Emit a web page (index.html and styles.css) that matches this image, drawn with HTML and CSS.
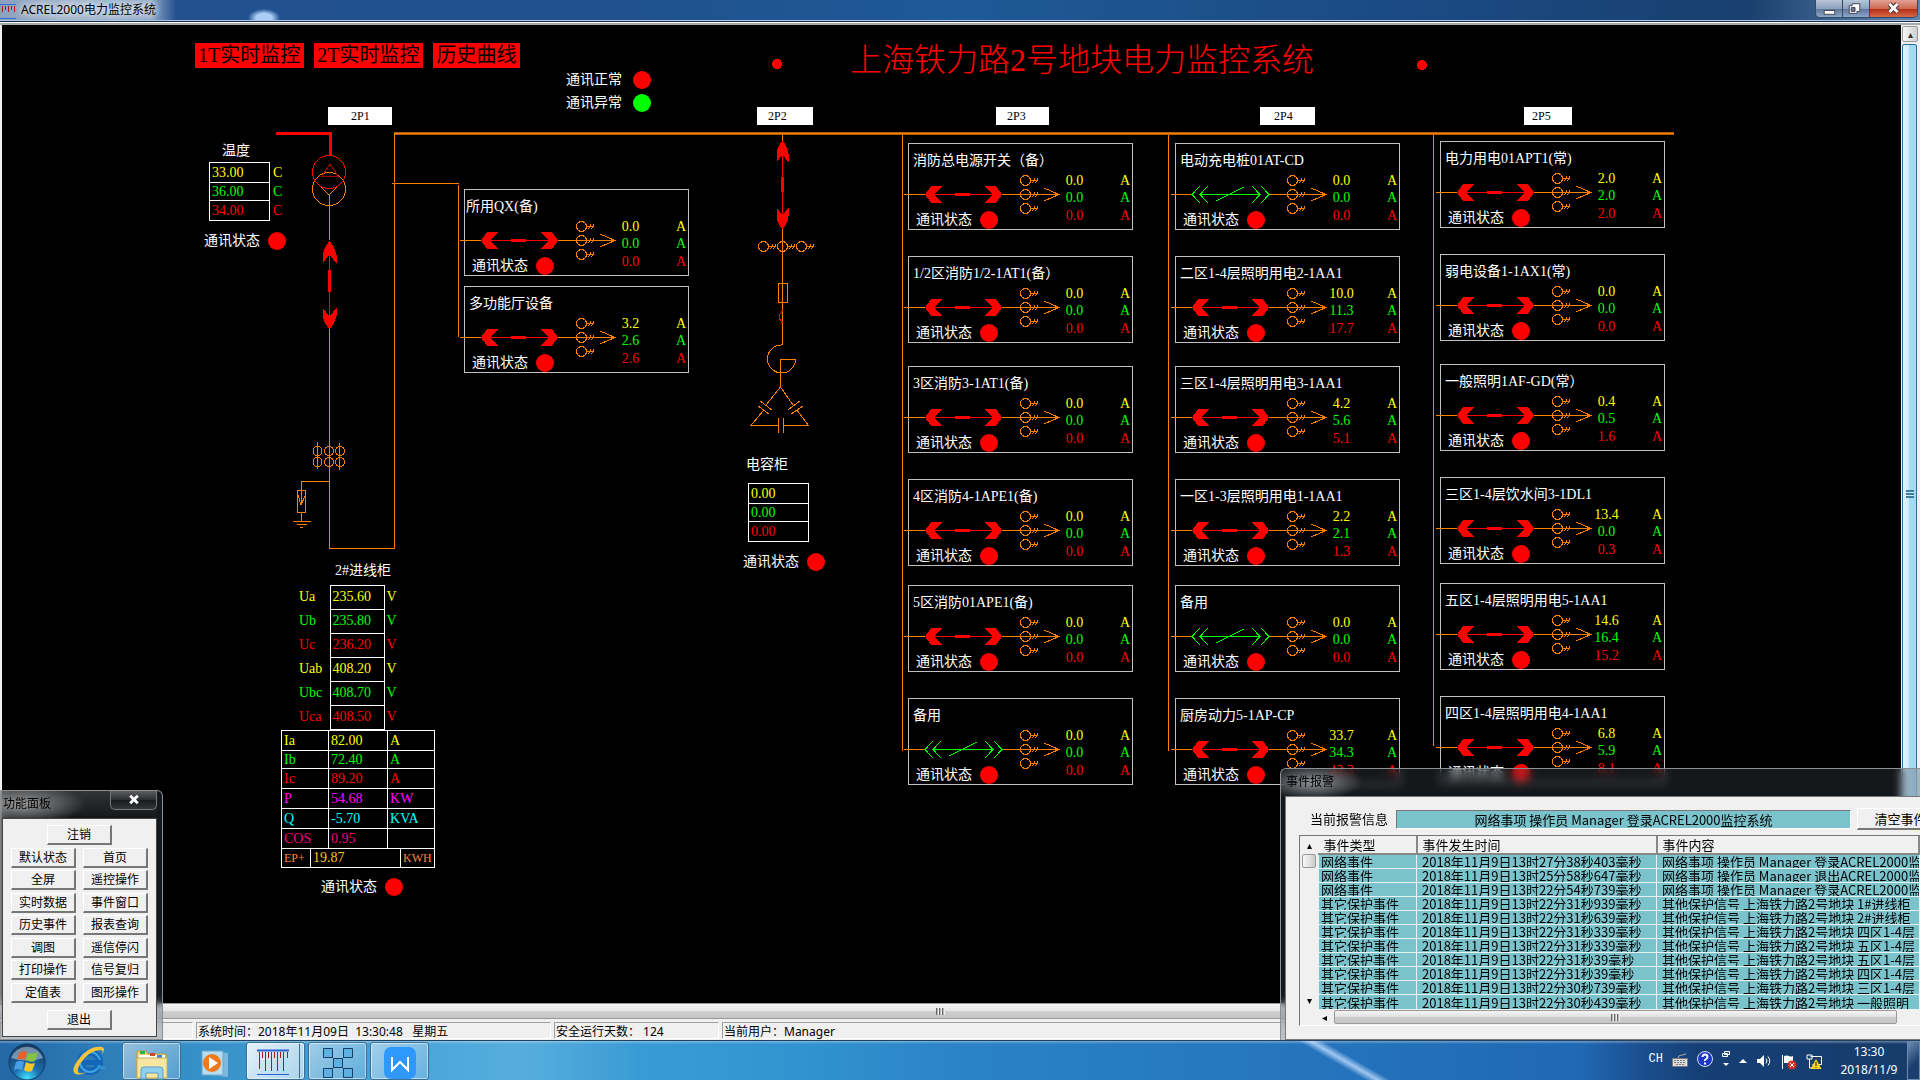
FILE: index.html
```html
<!DOCTYPE html>
<html lang="zh-CN">
<head>
<meta charset="utf-8">
<title>ACREL2000电力监控系统</title>
<link rel="stylesheet" href="styles.css">
</head>
<body>
<svg class="defs" aria-hidden="true">
  <defs>
    <g id="key"><circle cx="0" cy="0" r="5"/><path d="M5 0h4M7 3l2-5M10 3l2-5M9 0h3"/></g>
    <g id="feed">
      <path d="M-5 51.5H16M93 51.5H150M135 45l15 6.500l-15 6.500"/>
      <use href="#key" x="116.500" y="37.500"/><use href="#key" x="116.500" y="51.500"/><use href="#key" x="116.500" y="65.500"/>
    </g>
    <g id="closed">
      <use href="#feed"/>
      <path class="on" d="M16 51.500L22 43H33L25 51.500L33 60H22ZM93 51.500L87 43H76L84 51.500L76 60H87ZM25 51H84V52H25ZM46 50H61V53H46Z"/>
    </g>
    <g id="open">
      <use href="#feed"/>
      <path class="off" d="M24 43L16 51.500L24 60M32 43L24 51.500L32 60M24 51.500H84M40 58L68 44M76 43L84 51.500L76 60M85 43L93 51.500L85 60"/>
    </g>
  </defs>
</svg>

<header class="titlebar">
  <svg class="app-icon" viewBox="0 0 16 16"><path d="M0 1.500H16M0 15.500H16" stroke="#2d6fd8"/><path d="M2.500 3V9M5.500 3V7M8.500 3V9M11.500 3V7M14.500 3V9" stroke="#b01818"/></svg>
  <h1 class="app-title">ACREL2000电力监控系统</h1>
  <div class="caption-buttons">
    <button class="cap" aria-label="最小化"><svg viewBox="0 0 27 18"><rect x="8.500" y="10.500" width="11" height="4" fill="#fff" stroke="#445"/></svg></button>
    <button class="cap" aria-label="还原"><svg viewBox="0 0 27 18"><path d="M9.500 3.500h8v8h-3v2h-8v-8h3z" fill="#fff" stroke="#445"/><path d="M8.500 7.500h4v4h-4z" fill="#678" stroke="#445"/></svg></button>
    <button class="cap close" aria-label="关闭"><svg viewBox="0 0 47 18"><path d="M19.500 4l8 8m0-8l-8 8" stroke="#433" stroke-width="5"/><path d="M19.500 4l8 8m0-8l-8 8" stroke="#fff" stroke-width="3"/></svg></button>
  </div>
</header>

<main class="workspace">
<section class="mimic">
  <svg class="wiring" viewBox="2 25 1899 978">
    <g class="line">
      <path class="bus-edge" d="M394 133.500H1674"/>
      <path class="bus-core" d="M394 133.500H1674"/>
      <path d="M394.500 133V548.500H328.500M392 183.500H459M458.500 185V336.500M902.500 135V751M1168.500 135V751M1433.500 135V746"/>
      <circle cx="329" cy="189" r="16.500"/>
      <path d="M319 185l10 10l10-10M329.500 195V240M329.500 329V548"/>
      <circle cx="317.500" cy="451" r="4.500"/><circle cx="329" cy="451" r="4.500"/><circle cx="340" cy="451" r="4.500"/>
      <circle cx="317.500" cy="462" r="4.500"/><circle cx="329" cy="462" r="4.500"/><circle cx="340" cy="462" r="4.500"/>
      <path d="M317.500 442V469M339.500 443V470M329 481.500H301.500V505M297.500 490.500H305.500V512.500H297.500ZM298 495l3 10l4-9M301.500 512V521M293 521.500H311M297 524.500H307M300 527.500H303"/>
      <path d="M782.500 135V142M782.500 229V345M778.500 283.500H787.500V302.500H778.500Z"/>
      <use href="#key" x="763.500" y="246.500"/><use href="#key" x="782.500" y="246.500"/><use href="#key" x="801.500" y="246.500"/>
      <path d="M782.500 345A14 14 0 1 0 795.500 359.500H780.500V387"/>
      <path d="M780.500 387L766 405M760 401l12 9M758 406l11 8M763 411L751 425.500H778M778.500 418V433M783.500 418V433M784 425.500H808.500L797 410M780.500 387L793 405M788 410l12-9M791 414l12-8"/>
    </g>
    <g class="red-line">
      <path stroke-width="3" d="M276 133.500H330.500V156"/>
      <circle cx="329" cy="172" r="16.500"/>
      <path class="dim" d="M330 164L322 176H338Z"/>
      <path d="M329.500 242V328M782.500 142V228M782.500 311l-3 4v4l3 4"/>
      <path stroke-width="3" d="M329.500 270V292M782.500 177V192"/>
    </g>
    <g class="on">
      <path d="M329.500 241q5 6 7 14v8l-7-8l-7 8v-8q2-8 7-14ZM329.500 329q5-5 7-13v-8l-7 8l-7-8v8q2 8 7 13Z"/>
      <path d="M782.500 141q5 5 6 13v8l-6-7l-6 7v-8q1-8 6-13ZM782.500 229q5-5 6-13v-8l-6 7l-6-7v8q1 8 6 13Z"/>
      <circle cx="777" cy="64" r="5"/><circle cx="1422" cy="65" r="5"/>
    </g>
  </svg>

  <nav class="node pages">
    <button>1T实时监控</button><button>2T实时监控</button><button>历史曲线</button>
  </nav>
  <div class="node legend">
    <p class="status">通讯正常<i class="lamp"></i></p>
    <p class="status">通讯异常<i class="lamp bad"></i></p>
  </div>
  <h2 class="node heading">上海铁力路2号地块电力监控系统</h2>

  <span class="node tag tag-1">2P1</span>
  <span class="node tag tag-2">2P2</span>
  <span class="node tag tag-3">2P3</span>
  <span class="node tag tag-4">2P4</span>
  <span class="node tag tag-5">2P5</span>

  <div class="node temperature">
    <h3>温度</h3>
    <table class="triple">
      <tr class="a"><td class="box">33.00</td><td>C</td></tr>
      <tr class="b"><td class="box">36.00</td><td>C</td></tr>
      <tr class="c"><td class="box">34.00</td><td>C</td></tr>
    </table>
    <p class="status">通讯状态<i class="lamp"></i></p>
  </div>

  <div class="node incomer">
    <h3>2#进线柜</h3>
    <table class="volts">
      <tr class="a"><th>Ua</th><td class="box">235.60</td><td>V</td></tr>
      <tr class="b"><th>Ub</th><td class="box">235.80</td><td>V</td></tr>
      <tr class="c"><th>Uc</th><td class="box">236.20</td><td>V</td></tr>
      <tr class="a"><th>Uab</th><td class="box">408.20</td><td>V</td></tr>
      <tr class="b"><th>Ubc</th><td class="box">408.70</td><td>V</td></tr>
      <tr class="c"><th>Uca</th><td class="box">408.50</td><td>V</td></tr>
    </table>
    <table class="power">
      <colgroup><col class="w1"><col class="w2"><col class="w3"><col class="w4"><col class="w5"></colgroup>
      <tr class="a"><th colspan="2">Ia</th><td>82.00</td><td colspan="2">A</td></tr>
      <tr class="b short"><th colspan="2">Ib</th><td>72.40</td><td colspan="2">A</td></tr>
      <tr class="c"><th colspan="2">Ic</th><td>89.20</td><td colspan="2">A</td></tr>
      <tr class="p"><th colspan="2">P</th><td>54.68</td><td colspan="2">KW</td></tr>
      <tr class="q"><th colspan="2">Q</th><td>-5.70</td><td colspan="2">KVA</td></tr>
      <tr class="cos"><th colspan="2">COS</th><td>0.95</td><td colspan="2"></td></tr>
      <tr class="ep"><th>EP+</th><td class="energy" colspan="3">19.87</td><td class="kwh">KWH</td></tr>
    </table>
    <p class="status">通讯状态<i class="lamp"></i></p>
  </div>

  <div class="node capacitor">
    <h3>电容柜</h3>
    <table class="triple">
      <tr class="a"><td class="box">0.00</td></tr>
      <tr class="b"><td class="box">0.00</td></tr>
      <tr class="c"><td class="box">0.00</td></tr>
    </table>
    <p class="status">通讯状态<i class="lamp"></i></p>
  </div>

  <div class="node column column-1">
    <article class="feeder flush"><h3>所用QX(备)</h3><div class="left"><svg viewBox="-6 28 158 40"><use href="#closed"/></svg><p class="status">通讯状态<i class="lamp"></i></p></div>
      <table><tr class="a"><td>0.0</td><td>A</td></tr><tr class="b"><td>0.0</td><td>A</td></tr><tr class="c"><td>0.0</td><td>A</td></tr></table></article>
    <article class="feeder"><h3>多功能厅设备</h3><div class="left"><svg viewBox="-6 28 158 40"><use href="#closed"/></svg><p class="status">通讯状态<i class="lamp"></i></p></div>
      <table><tr class="a"><td>3.2</td><td>A</td></tr><tr class="b"><td>2.6</td><td>A</td></tr><tr class="c"><td>2.6</td><td>A</td></tr></table></article>
  </div>

  <div class="node column column-3">
    <article class="feeder"><h3>消防总电源开关（备）</h3><div class="left"><svg viewBox="-6 28 158 40"><use href="#closed"/></svg><p class="status">通讯状态<i class="lamp"></i></p></div>
      <table><tr class="a"><td>0.0</td><td>A</td></tr><tr class="b"><td>0.0</td><td>A</td></tr><tr class="c"><td>0.0</td><td>A</td></tr></table></article>
    <article class="feeder"><h3>1/2区消防1/2-1AT1(备）</h3><div class="left"><svg viewBox="-6 28 158 40"><use href="#closed"/></svg><p class="status">通讯状态<i class="lamp"></i></p></div>
      <table><tr class="a"><td>0.0</td><td>A</td></tr><tr class="b"><td>0.0</td><td>A</td></tr><tr class="c"><td>0.0</td><td>A</td></tr></table></article>
    <article class="feeder"><h3>3区消防3-1AT1(备)</h3><div class="left"><svg viewBox="-6 28 158 40"><use href="#closed"/></svg><p class="status">通讯状态<i class="lamp"></i></p></div>
      <table><tr class="a"><td>0.0</td><td>A</td></tr><tr class="b"><td>0.0</td><td>A</td></tr><tr class="c"><td>0.0</td><td>A</td></tr></table></article>
    <article class="feeder"><h3>4区消防4-1APE1(备)</h3><div class="left"><svg viewBox="-6 28 158 40"><use href="#closed"/></svg><p class="status">通讯状态<i class="lamp"></i></p></div>
      <table><tr class="a"><td>0.0</td><td>A</td></tr><tr class="b"><td>0.0</td><td>A</td></tr><tr class="c"><td>0.0</td><td>A</td></tr></table></article>
    <article class="feeder"><h3>5区消防01APE1(备)</h3><div class="left"><svg viewBox="-6 28 158 40"><use href="#closed"/></svg><p class="status">通讯状态<i class="lamp"></i></p></div>
      <table><tr class="a"><td>0.0</td><td>A</td></tr><tr class="b"><td>0.0</td><td>A</td></tr><tr class="c"><td>0.0</td><td>A</td></tr></table></article>
    <article class="feeder"><h3>备用</h3><div class="left"><svg viewBox="-6 28 158 40"><use href="#open"/></svg><p class="status">通讯状态<i class="lamp"></i></p></div>
      <table><tr class="a"><td>0.0</td><td>A</td></tr><tr class="b"><td>0.0</td><td>A</td></tr><tr class="c"><td>0.0</td><td>A</td></tr></table></article>
  </div>

  <div class="node column column-4">
    <article class="feeder"><h3>电动充电桩01AT-CD</h3><div class="left"><svg viewBox="-6 28 158 40"><use href="#open"/></svg><p class="status">通讯状态<i class="lamp"></i></p></div>
      <table><tr class="a"><td>0.0</td><td>A</td></tr><tr class="b"><td>0.0</td><td>A</td></tr><tr class="c"><td>0.0</td><td>A</td></tr></table></article>
    <article class="feeder"><h3>二区1-4层照明用电2-1AA1</h3><div class="left"><svg viewBox="-6 28 158 40"><use href="#closed"/></svg><p class="status">通讯状态<i class="lamp"></i></p></div>
      <table><tr class="a"><td>10.0</td><td>A</td></tr><tr class="b"><td>11.3</td><td>A</td></tr><tr class="c"><td>17.7</td><td>A</td></tr></table></article>
    <article class="feeder"><h3>三区1-4层照明用电3-1AA1</h3><div class="left"><svg viewBox="-6 28 158 40"><use href="#closed"/></svg><p class="status">通讯状态<i class="lamp"></i></p></div>
      <table><tr class="a"><td>4.2</td><td>A</td></tr><tr class="b"><td>5.6</td><td>A</td></tr><tr class="c"><td>5.1</td><td>A</td></tr></table></article>
    <article class="feeder"><h3>一区1-3层照明用电1-1AA1</h3><div class="left"><svg viewBox="-6 28 158 40"><use href="#closed"/></svg><p class="status">通讯状态<i class="lamp"></i></p></div>
      <table><tr class="a"><td>2.2</td><td>A</td></tr><tr class="b"><td>2.1</td><td>A</td></tr><tr class="c"><td>1.3</td><td>A</td></tr></table></article>
    <article class="feeder"><h3>备用</h3><div class="left"><svg viewBox="-6 28 158 40"><use href="#open"/></svg><p class="status">通讯状态<i class="lamp"></i></p></div>
      <table><tr class="a"><td>0.0</td><td>A</td></tr><tr class="b"><td>0.0</td><td>A</td></tr><tr class="c"><td>0.0</td><td>A</td></tr></table></article>
    <article class="feeder"><h3>厨房动力5-1AP-CP</h3><div class="left"><svg viewBox="-6 28 158 40"><use href="#closed"/></svg><p class="status">通讯状态<i class="lamp"></i></p></div>
      <table><tr class="a"><td>33.7</td><td>A</td></tr><tr class="b"><td>34.3</td><td>A</td></tr><tr class="c"><td>42.3</td><td>A</td></tr></table></article>
  </div>

  <div class="node column column-5">
    <article class="feeder"><h3>电力用电01APT1(常)</h3><div class="left"><svg viewBox="-6 28 158 40"><use href="#closed"/></svg><p class="status">通讯状态<i class="lamp"></i></p></div>
      <table><tr class="a"><td>2.0</td><td>A</td></tr><tr class="b"><td>2.0</td><td>A</td></tr><tr class="c"><td>2.0</td><td>A</td></tr></table></article>
    <article class="feeder"><h3>弱电设备1-1AX1(常)</h3><div class="left"><svg viewBox="-6 28 158 40"><use href="#closed"/></svg><p class="status">通讯状态<i class="lamp"></i></p></div>
      <table><tr class="a"><td>0.0</td><td>A</td></tr><tr class="b"><td>0.0</td><td>A</td></tr><tr class="c"><td>0.0</td><td>A</td></tr></table></article>
    <article class="feeder"><h3>一般照明1AF-GD(常）</h3><div class="left"><svg viewBox="-6 28 158 40"><use href="#closed"/></svg><p class="status">通讯状态<i class="lamp"></i></p></div>
      <table><tr class="a"><td>0.4</td><td>A</td></tr><tr class="b"><td>0.5</td><td>A</td></tr><tr class="c"><td>1.6</td><td>A</td></tr></table></article>
    <article class="feeder"><h3>三区1-4层饮水间3-1DL1</h3><div class="left"><svg viewBox="-6 28 158 40"><use href="#closed"/></svg><p class="status">通讯状态<i class="lamp"></i></p></div>
      <table><tr class="a"><td>13.4</td><td>A</td></tr><tr class="b"><td>0.0</td><td>A</td></tr><tr class="c"><td>0.3</td><td>A</td></tr></table></article>
    <article class="feeder"><h3>五区1-4层照明用电5-1AA1</h3><div class="left"><svg viewBox="-6 28 158 40"><use href="#closed"/></svg><p class="status">通讯状态<i class="lamp"></i></p></div>
      <table><tr class="a"><td>14.6</td><td>A</td></tr><tr class="b"><td>16.4</td><td>A</td></tr><tr class="c"><td>15.2</td><td>A</td></tr></table></article>
    <article class="feeder"><h3>四区1-4层照明用电4-1AA1</h3><div class="left"><svg viewBox="-6 28 158 40"><use href="#closed"/></svg><p class="status">通讯状态<i class="lamp"></i></p></div>
      <table><tr class="a"><td>6.8</td><td>A</td></tr><tr class="b"><td>5.9</td><td>A</td></tr><tr class="c"><td>8.1</td><td>A</td></tr></table></article>
  </div>
</section>
<div class="vscroll">
  <button class="vscroll-up" aria-label="向上滚动">▴</button>
  <div class="vscroll-thumb"><i></i></div>
</div>
</main>

<div class="hscroll"><i class="grip"></i></div>

<footer class="statusbar">
  <span class="cell first"></span>
  <span class="cell time">系统时间：2018年11月09日&nbsp; 13:30:48&nbsp;&nbsp; 星期五</span>
  <span class="cell days">安全运行天数： 124</span>
  <span class="cell user">当前用户：Manager</span>
</footer>

<section class="window panel">
  <header class="window-title"><h2>功能面板</h2><button class="window-close" aria-label="关闭"><svg viewBox="0 0 47 19"><path d="M20 5l8 8m0-8l-8 8" stroke="#fff" stroke-width="3"/></svg></button></header>
  <div class="panel-body">
    <button class="classic wide">注销</button>
    <div class="panel-grid">
      <button class="classic">默认状态</button><button class="classic">首页</button>
      <button class="classic">全屏</button><button class="classic">遥控操作</button>
      <button class="classic">实时数据</button><button class="classic">事件窗口</button>
      <button class="classic">历史事件</button><button class="classic">报表查询</button>
      <button class="classic">调图</button><button class="classic">遥信停闪</button>
      <button class="classic">打印操作</button><button class="classic">信号复归</button>
      <button class="classic">定值表</button><button class="classic">图形操作</button>
    </div>
    <button class="classic wide">退出</button>
  </div>
</section>

<section class="window events">
  <header class="window-title"><h2>事件报警</h2></header>
  <div class="events-body">
    <div class="current">
      <label for="alarm">当前报警信息</label>
      <input id="alarm" type="text" readonly value="网络事项 操作员 Manager 登录ACREL2000监控系统">
      <button class="classic clear">清空事件</button>
    </div>
    <div class="list">
      <div class="list-scroll"><b class="up">▴</b><i></i><b class="down">▾</b></div>
      <table class="log">
        <colgroup><col class="kind"><col class="when"><col class="what"></colgroup>
        <thead><tr><th>事件类型</th><th>事件发生时间</th><th>事件内容</th></tr></thead>
        <tbody>
        <tr><td>网络事件</td><td>2018年11月9日13时27分38秒403毫秒</td><td>网络事项 操作员 Manager 登录ACREL2000监控系统</td></tr>
        <tr><td>网络事件</td><td>2018年11月9日13时25分58秒647毫秒</td><td>网络事项 操作员 Manager 退出ACREL2000监控系统</td></tr>
        <tr><td>网络事件</td><td>2018年11月9日13时22分54秒739毫秒</td><td>网络事项 操作员 Manager 登录ACREL2000监控系统</td></tr>
        <tr><td>其它保护事件</td><td>2018年11月9日13时22分31秒939毫秒</td><td>其他保护信号 上海铁力路2号地块 1#进线柜</td></tr>
        <tr><td>其它保护事件</td><td>2018年11月9日13时22分31秒639毫秒</td><td>其他保护信号 上海铁力路2号地块 2#进线柜</td></tr>
        <tr><td>其它保护事件</td><td>2018年11月9日13时22分31秒339毫秒</td><td>其他保护信号 上海铁力路2号地块 四区1-4层</td></tr>
        <tr><td>其它保护事件</td><td>2018年11月9日13时22分31秒339毫秒</td><td>其他保护信号 上海铁力路2号地块 五区1-4层</td></tr>
        <tr><td>其它保护事件</td><td>2018年11月9日13时22分31秒39毫秒</td><td>其他保护信号 上海铁力路2号地块 五区1-4层</td></tr>
        <tr><td>其它保护事件</td><td>2018年11月9日13时22分31秒39毫秒</td><td>其他保护信号 上海铁力路2号地块 四区1-4层</td></tr>
        <tr><td>其它保护事件</td><td>2018年11月9日13时22分30秒739毫秒</td><td>其他保护信号 上海铁力路2号地块 三区1-4层</td></tr>
        <tr><td>其它保护事件</td><td>2018年11月9日13时22分30秒439毫秒</td><td>其他保护信号 上海铁力路2号地块 一般照明</td></tr>
        </tbody>
      </table>
      <div class="list-hscroll"><b>◂</b><span><i class="grip"></i></span></div>
    </div>
  </div>
</section>

<nav class="taskbar">
  <button class="task orb" aria-label="开始"><svg viewBox="0 0 40 40">
    <defs><radialGradient id="orb" cx=".5" cy=".95" r=".9"><stop offset="0" stop-color="#3fe0ff"/><stop offset=".4" stop-color="#1b6fae"/><stop offset="1" stop-color="#173b63"/></radialGradient></defs>
    <circle cx="20" cy="20" r="18" fill="url(#orb)" stroke="#0f3a63"/><path d="M4 16a17 17 0 0 1 32 0q-15 5-32 0z" fill="#fff" opacity=".4"/>
    <path d="M12 11q4-3 8-1l-2 8q-4-2-8 0z" fill="#e8622a"/><path d="M21 11q4 2 10-1l-3 9q-4 2-9-1z" fill="#86c440"/><path d="M9 20q4-2 8 0l-2 8q-4-2-8 0z" fill="#4aa0e8"/><path d="M19 20q4 3 9 1l-3 8q-4 2-8-1z" fill="#f7c928"/></svg></button>
  <button class="task plain" aria-label="浏览器"><svg viewBox="0 0 40 40"><circle cx="20" cy="20" r="9.500" fill="none" stroke="#1466b8" stroke-width="7"/><circle cx="20" cy="20" r="10" fill="none" stroke="#3fa4e4" stroke-width="2"/><path d="M13 20.500h20" stroke="#1466b8" stroke-width="5"/><path d="M27 24h8v3h-8z" fill="#2f92cf"/><path d="M6 32q-6-3 2-14Q19 3 32 5q4 1 0 8 2-5-2-5Q20 8 10 22q-4 8-1 9 4 1 10-3-8 6-13 4z" fill="#f6c43a"/></svg></button>
  <button class="task lit" aria-label="资源管理器"><svg viewBox="0 0 40 40"><path d="M5 8h9l2 3h18v24H5z" fill="#efd67c" stroke="#b99b3d"/><path d="M7 12h26v4H7z" fill="#fff"/><path d="M8 8h5v3H8z" fill="#2eb04a"/><path d="M18 10h5v3h-5z" fill="#d2452c"/><path d="M25 12h5v3h-5z" fill="#3d84d8"/><path d="M5 15h30v20H5z" fill="#f6e6a2" stroke="#c9ad55"/><path d="M9 36V27q0-3 3-3h16q3 0 3 3v9h-5v-6H14v6z" fill="#8ed0ee" stroke="#5a9fc4"/></svg></button>
  <button class="task plain" aria-label="媒体播放器"><svg viewBox="0 0 40 40"><path d="M16 9l18 2v24l-18-2z" fill="#7db8da"/><path d="M8 9h21v24H8z" fill="#b8dcef" stroke="#6aa5cb"/><circle cx="18" cy="21" r="9" fill="#ef7a1c"/><path d="M15 15l9 6-9 6z" fill="#fff"/></svg></button>
  <button class="task lit active" aria-label="ACREL2000"><svg viewBox="0 0 40 40"><path d="M4 7.500H36" stroke="#2b62d4" stroke-width="2"/><path d="M4 31.500H36" stroke="#2b62d4"/><path d="M6.500 9V26M9.500 9V15M12.500 9V28M15.500 9V15M18.500 9V28M21.500 9V15M24.500 9V28M27.500 9V15M30.500 9V28M34.500 9V15" stroke="#b01818"/></svg></button>
  <button class="task lit" aria-label="网络组态"><svg viewBox="0 0 40 40"><path d="M10 10L30 30M30 10L10 30" stroke="#1b3d5a"/><g fill="#5fb0e2" stroke="#173f66"><path d="M5.500 5.500h9v9h-9zM25.500 5.500h9v9h-9zM15.500 15.500h9v9h-9zM5.500 25.500h9v9h-9zM25.500 25.500h9v9h-9z"/></g></svg></button>
  <button class="task lit" aria-label="WPS"><svg viewBox="0 0 40 40"><rect x="4" y="4" width="32" height="32" rx="7" fill="#2f98ff"/><path d="M12 14v13l8-8 8 8V14" fill="none" stroke="#fff" stroke-width="2"/></svg></button>
  <div class="tray">
    <span class="ime">CH</span>
    <svg class="tray-icon" viewBox="0 0 16 16"><path d="M.500 7.500h15v8H.500z" fill="#ddd" stroke="#777"/><path d="M2 9.500h12M2 11.500h12M4 13.500h8" stroke="#777" stroke-dasharray="2 1"/><path d="M6 7q0-3 4-3t4-2" fill="none" stroke="#aaa"/></svg>
    <svg class="tray-icon" viewBox="0 0 16 16"><circle cx="8" cy="8" r="7.500" fill="#1738c8" stroke="#dde"/><path d="M5.500 6q0-2.500 2.500-2.500T10.500 6q0 1.300-2.500 3v1M8 11.500v2" fill="none" stroke="#fff" stroke-width="2"/></svg>
    <svg class="tray-icon small" viewBox="0 0 8 18"><path d="M2.500 1.500h5v3h-5zM.500 3.500h5v3h-5z" fill="#19457c" stroke="#fff"/><path d="M1 13h6l-3 3z" fill="#fff"/></svg>
    <svg class="tray-icon small" viewBox="0 0 8 16"><path d="M0 12h8l-4-4z" fill="#fff"/></svg>
    <svg class="tray-icon low" viewBox="0 0 16 16"><path d="M1 6h3l4-4v12l-4-4H1z" fill="#fff"/><path d="M10 5.500q2 2.500 0 5M12 3.500q3.500 4.500 0 9" fill="none" stroke="#fff"/></svg>
    <svg class="tray-icon low" viewBox="0 0 16 16"><path d="M1.500 2v14" stroke="#fff"/><path d="M3 3q3-1 5 0t4 0v7H3z" fill="#fff"/><circle cx="11" cy="12" r="4.500" fill="#d93025"/><path d="M9 10l4 4m0-4l-4 4" stroke="#fff"/></svg>
    <svg class="tray-icon low" viewBox="0 0 16 16"><path d="M4.500 3.500h11v8h-9" fill="#1c3f66" stroke="#fff"/><path d="M1 2h5v4H1zM3.500 6v9h4" fill="none" stroke="#fff"/><path d="M10 6l5.500 10h-11z" fill="#f9d31c"/><path d="M10 9v4M10 14v1" stroke="#222"/></svg>
    <time class="clock">13:30<br>2018/11/9</time>
    <button class="show-desktop" aria-label="显示桌面"></button>
  </div>
</nav>
</body>
</html>
```
FILE: styles.css
```css
* { box-sizing: border-box; }
body {
  margin: 0;
  height: 100vh;
  display: flex;
  flex-direction: column;
  position: relative;
  overflow: hidden;
  background: #f0f0f0;
  font: 12px "Noto Sans", "Noto Sans CJK SC", sans-serif;
}
h1, h2, h3, p { margin: 0; font-size: inherit; font-weight: inherit; }
button { padding: 0; border: 0; font: inherit; color: inherit; background: none; }
svg { display: block; }
table { border-collapse: collapse; border-spacing: 0; }
th, td { padding: 0; font-weight: inherit; text-align: left; }
.defs { position: absolute; width: 0; height: 0; }

/* Title bar */
.titlebar {
  height: 25px;
  display: flex;
  gap: 5px;
  border-bottom: 2px solid #a8a8a8;
  background:
    linear-gradient(#aac4e2, #aac4e2) 0 20px / 100% 1px no-repeat,
    linear-gradient(#1b2c48, #1b2c48) 0 21px / 100% 1px no-repeat,
    linear-gradient(#fff, #fff) 0 22px / 100% 1px no-repeat,
    radial-gradient(ellipse 16px 9px at 264px 18px, #a9cdf5 50%, transparent),
    linear-gradient(90deg, #8aa0bc, #a3b7cf 70px, #93abc8 150px, #24508f 176px, #1f528f 640px, #1e5a96 960px, #1b4a84 1400px, #19406f 1750px, #6285ad);
}
.app-icon { width: 16px; height: 16px; margin-top: 3px; }
.app-title { font-size: 12px; line-height: 20px; flex: 1; text-shadow: 0 0 6px #fff, 0 0 8px #fff; }
.caption-buttons { display: flex; height: 18px; margin-right: 2px; border: 1px solid #33496a; border-top: 0; border-radius: 0 0 5px 5px; overflow: hidden; }
.cap { width: 27px; background: linear-gradient(#b8c6d8, #8da2bc 50%, #5b7698 51%, #8ba6c6); border-right: 1px solid #33496a; }
.cap.close { width: 47px; border: 0; background: linear-gradient(#e0a294, #cf6a55 50%, #b02b12 51%, #d8674a); }
.cap svg { width: 100%; height: 18px; fill: none; }

/* Workspace */
.workspace { flex: 1; min-height: 0; display: flex; padding-left: 2px; }
.mimic {
  flex: 1;
  position: relative;
  overflow: hidden;
  background: #000;
  color: #fff;
  font: 14px/16px "Liberation Serif", "Noto Sans CJK SC", serif;
}
.wiring { width: 1899px; height: 978px; }
svg .line, .feeder svg { stroke: #ff8000; fill: none; shape-rendering: crispEdges; }
.bus-edge { stroke: #b85c00; stroke-width: 3; }
.bus-core { stroke: #ff8000; stroke-width: 1; }
.red-line { stroke: #f00; fill: none; shape-rendering: crispEdges; }
.dim { stroke: #a00000; }
.on { fill: #f00; stroke: none; shape-rendering: crispEdges; }
.off { stroke: #0f0; }
.a { color: #ff0; }
.b { color: #0f0; }
.c { color: #f00; }
.p { color: #f0f; }
.q { color: #0ff; }
.cos { color: #f00080; }
.ep { color: #ff8040; font-size: 12px; }
.node { position: absolute; }
.status { display: flex; align-items: center; gap: 8px; height: 18px; white-space: nowrap; }
.lamp { width: 18px; height: 18px; border-radius: 50%; background: #f00; }
.lamp.bad { background: #0f0; }

.pages { left: 193px; top: 18px; display: flex; gap: 10px; }
.pages button { padding: 0 4px 0 3px; height: 25px; background: #f00; color: #000; font-size: 20px; line-height: 25px; }
.legend { left: 564px; top: 43px; }
.legend .status { height: 23px; gap: 11px; }
.heading { left: 848px; top: 15px; color: #f00; font-size: 32px; line-height: 40px; font-weight: 300; white-space: nowrap; }
.tag { top: 82px; height: 18px; background: #fff; color: #000; font-size: 12px; line-height: 18px; }
.tag-1 { left: 326px; width: 64px; padding-left: 23px; }
.tag-2 { left: 755px; width: 56px; padding-left: 11px; }
.tag-3 { left: 994px; width: 53px; padding-left: 11px; }
.tag-4 { left: 1258px; width: 55px; padding-left: 14px; }
.tag-5 { left: 1522px; width: 48px; padding-left: 8px; }

.box { border: 1px solid #fff; padding-left: 2px; }
.triple tr { height: 20px; }
.triple tr.b { height: 18px; }
.triple td { padding-top: 1px; }
.triple .box { width: 60px; }
.triple td + td { padding-left: 3px; }
.temperature { left: 202px; top: 118px; }
.temperature h3 { padding-left: 18px; }
.temperature .triple { margin: 3px 0 11px 5px; }
.capacitor { left: 741px; top: 432px; }
.capacitor h3 { padding-left: 3px; }
.capacitor .triple { margin: 10px 0 11px 5px; }

.incomer { left: 279px; top: 538px; }
.incomer h3 { padding-left: 54px; }
.volts { margin: 6px 0 0 18px; }
.volts tr { height: 24px; }
.volts th { width: 31px; }
.volts th, .volts td { padding-bottom: 2px; }
.volts .box { width: 54px; }
.volts td + td { padding-left: 2px; }
.power { width: 154px; table-layout: fixed; }
.power tr { height: 20px; }
.power tr.short { height: 18px; }
.power tr.ep { height: 19px; }
.power th, .power td { border: 1px solid #fff; padding-left: 2px; }
.power .energy { font-size: 14px; color: #ffc020; }
.w1 { width: 29px; } .w2 { width: 18px; } .w3 { width: 59px; } .w4 { width: 13px; } .w5 { width: 34px; }
.incomer .status { margin: 10px 0 0 40px; }

.column { display: flex; flex-direction: column; gap: 26px; }
.column-1 { left: 462px; top: 164px; gap: 10px; }
.column-3 { left: 906px; top: 118px; }
.column-4 { left: 1173px; top: 118px; }
.column-5 { left: 1438px; top: 116px; }
.column .feeder:nth-child(3) { margin-top: -3px; }
.column .feeder:nth-child(5) { margin-top: -7px; }
.feeder {
  width: 225px;
  height: 87px;
  border: 1px solid #c0c0c0;
  display: grid;
  grid-template: 27px 1fr / 148px 1fr;
}
.feeder h3 { grid-column: 1 / 3; padding: 9px 0 0 4px; white-space: nowrap; }
.feeder.flush h3 { padding-left: 1px; }
.feeder svg { width: 158px; height: 40px; margin-left: -6px; overflow: visible; }
.feeder .status { margin-top: 1px; padding-left: 7px; height: 16px; }
.feeder table { width: 76px; height: 52px; margin-top: 1px; }
.feeder tr { height: 17px; }
.feeder tr.b { height: 18px; }
.feeder td { width: 35px; text-align: center; }
.feeder td + td { width: 41px; text-align: right; padding-right: 3px; }

/* Scroll bars */
.vscroll { width: 19px; padding: 1px 2px 0 1px; background: #f0f0f0; }
.vscroll-up { display: block; width: 16px; height: 16px; margin-bottom: 2px; border: 1px solid #999; border-radius: 2px; background: linear-gradient(90deg, #f6f6f6, #d2d2d2); font-size: 10px; line-height: 12px; color: #333; }
.vscroll-thumb { width: 15px; height: 900px; border: 1px solid #2c6f9e; border-radius: 2px; background: linear-gradient(90deg, #e2f4fd, #cdebfb 45%, #a5d8f3 50%, #a5d8f3); display: grid; place-items: center; }
.vscroll-thumb i { width: 8px; height: 8px; background: repeating-linear-gradient(#3d7d9e 0 2px, #cdebfb 2px 3px); }
.hscroll { height: 16px; border: 1px solid #999; border-left: 0; border-right: 0; background: linear-gradient(#f5f5f5, #e6e6e6 48%, #cfcfd2 52%, #c6c6c9); display: flex; align-items: center; padding-left: 936px; }
.grip { width: 9px; height: 7px; background: repeating-linear-gradient(90deg, #666 0 1px, #bbb 1px 2px, #eee 2px 3px); }

/* Status bar */
.statusbar { height: 21px; display: flex; gap: 3px; padding-top: 3px; line-height: 17px; white-space: nowrap; }
.cell { height: 17px; border: 1px solid #a0a0a0; border-right-color: #fff; border-bottom-color: #fff; padding-left: 1px; }
.first { width: 193px; }
.time { width: 355px; }
.days { width: 165px; }
.user { flex: 1; }

/* Floating windows */
.window { position: absolute; overflow: hidden; background: rgba(70, 80, 90, .3); backdrop-filter: blur(4px); border: 1px solid #8c9196; }
.window-title { display: flex; justify-content: space-between; }
.window-title h2 { width: 84px; color: #000; }
.panel { left: 0; bottom: 40px; width: 163px; height: 250px; padding: 0 5px 2px 2px; border-left: 0; border-radius: 0 6px 0 0; display: flex; flex-direction: column; }
.panel .window-title { height: 27px; background: linear-gradient(rgba(255,255,255,.12), transparent); }
.panel h2 { padding: 5px 0 0 3px; margin-left: -2px; line-height: 16px; background: radial-gradient(ellipse 64px 20px at 22px 13px, #9a9a9a, transparent); }
.window-close { width: 47px; height: 19px; border: 1px solid #777; border-top: 0; border-radius: 0 0 5px 5px; background: linear-gradient(#5b5d60, #2a2c2e 50%, #191a1b 51%, #33363a); }
.window-close svg { width: 45px; height: 18px; }
.panel-body { flex: 1; border: 1px solid #444; background: #f0f0f0; display: flex; flex-direction: column; align-items: center; padding-top: 6px; }
.classic { width: 65px; height: 20px; border: 1px solid #fff; border-right: 2px solid #777; border-bottom: 2px solid #777; background: #f0f0f0; color: #000; font-size: 12px; line-height: 16px; }
.panel-grid { display: grid; grid-template: 22px 23px 22px 23px 22px 23px 22px / 65px 65px; gap: 0 7px; margin: 3px 0 5px; }

.events { left: 1280px; right: 0; bottom: 39px; height: 273px; padding-left: 4px; border-right: 0; border-radius: 6px 0 0 0; display: flex; flex-direction: column; }
.events .window-title { height: 27px; }
.events h2 { margin-left: -4px; padding: 5px 0 0 5px; line-height: 16px; background: radial-gradient(ellipse 50px 18px at 32px 13px, #909498, transparent); }
.events-body { flex: 1; min-width: 0; border: 1px solid #777; border-right: 0; background: #f0f0f0; padding: 11px 0 0 13px; font: 13px/14px "Noto Sans CJK SC", sans-serif; }
.current { display: flex; align-items: center; height: 22px; overflow: hidden; }
.current label { flex: none; width: 97px; padding-left: 11px; }
.current input { flex: none; width: 455px; height: 19px; border: 1px solid #777; border-right-color: #fff; border-bottom-color: #fff; padding: 0; background: #7bc3cc; font: inherit; text-align: center; }
.current .clear { flex: none; width: 88px; height: 22px; margin-left: 6px; font-size: 13px; }
.list { margin-top: 5px; height: 191px; border: 1px solid #777; border-right: 0; border-bottom-color: #fff; display: grid; grid-template: 173px 1fr / 18px minmax(0, 1fr); overflow: hidden; }
.list-scroll { display: flex; flex-direction: column; align-items: center; }
.list-scroll i { width: 14px; height: 14px; border: 1px solid #999; border-radius: 2px; background: linear-gradient(90deg, #f8f8f8, #ccc); }
.list b { font-weight: 400; font-size: 10px; line-height: 18px; }
.down { margin-top: auto; }
.log { table-layout: fixed; width: 100%; white-space: nowrap; }
.log th { height: 18px; padding-left: 5px; border-right: 2px solid #888; border-bottom: 2px solid #888; line-height: 14px; }
.log tbody tr { height: 14px; }
.log td { background: #7bc3cc; border: 1px solid #e8f2f2; border-bottom-width: 0; line-height: 13px; padding-left: 2px; overflow: hidden; }
.log th + th, .log td + td { padding-left: 5px; }
.kind { width: 98px; } .when { width: 240px; }
.list-hscroll { grid-column: 2; display: flex; align-items: center; gap: 7px; padding-left: 4px; }
.list-hscroll b { line-height: 14px; }
.list-hscroll span { width: 563px; height: 14px; border: 1px solid #999; border-radius: 2px; background: linear-gradient(#f5f5f5, #e0e0e0 48%, #ccc 52%, #c6c6c6); display: grid; place-items: center; }

/* Taskbar */
.taskbar {
  height: 40px;
  position: relative;
  display: flex;
  align-items: center;
  border-top: 1px solid #20415f;
  background:
    linear-gradient(rgba(255,255,255,.35), transparent 3px),
    linear-gradient(30deg, transparent 42%, rgba(190,220,255,.8) 50%, transparent 58%) 1300px 0 / 90px 40px no-repeat,
    linear-gradient(90deg, #2468a6, #3590c8 190px, #4aa5da 420px, #57aedd 520px, #3a9bd4 640px, #3293d0 800px, #2a83c6 960px, #2575bd 1300px, #2068b4 1580px, #1b4f90 1640px, #153f75 1700px, #173c6b 1920px);
}
.task { width: 59px; height: 38px; margin-right: 3px; display: grid; place-items: center; }
.task svg { width: 40px; height: 40px; }
.orb { width: 54px; margin-right: 6px; }
.lit { border: 1px solid #3a6f96; border-radius: 3px; box-shadow: inset 0 0 0 1px rgba(255,255,255,.5); background: linear-gradient(135deg, rgba(255,255,255,.5), rgba(255,255,255,.15)); }
.active { padding-right: 6px; background: linear-gradient(90deg, transparent 52px, #3a6f96 52px 53px, transparent 53px), linear-gradient(135deg, #e4f2fa, #a9d2ea); }
.tray { margin-left: auto; height: 100%; display: flex; align-items: center; gap: 9px; color: #fff; }
.ime { font: 12px "Liberation Mono", monospace; padding-bottom: 4px; }
.tray-icon { width: 16px; height: 16px; margin-bottom: 4px; }
.tray-icon.small { width: 8px; height: 18px; }
.tray-icon.low { margin-bottom: 0; }
.clock { width: 76px; line-height: 18px; text-align: center; }
.show-desktop { width: 13px; height: 39px; margin-left: -9px; border: 1px solid #6b8bb0; background: linear-gradient(135deg, #6d8db3, #1a3f6e 60%); }
```
